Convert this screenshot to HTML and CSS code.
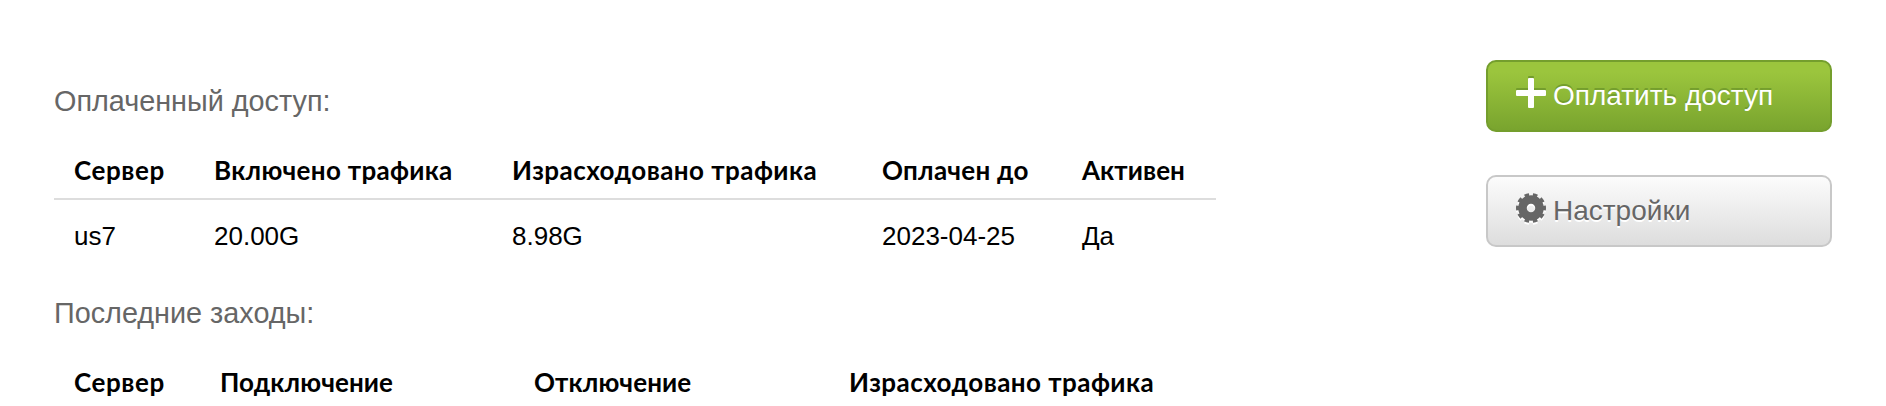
FILE: index.html
```html
<!DOCTYPE html>
<html lang="ru">
<head>
<meta charset="utf-8">
<title>Доступ</title>
<link rel="stylesheet" href="styles.css">
</head>
<body>
<div class="page">
<main class="main">
<h2 class="title">Оплаченный доступ:</h2>
<div class="row head paid"><span class="server">Сервер</span><span class="included">Включено трафика</span><span class="used">Израсходовано трафика</span><span class="until">Оплачен до</span><span>Активен</span></div>
<div class="row paid data"><span>us7</span><span>20.00G</span><span>8.98G</span><span>2023-04-25</span><span>Да</span></div>
<h2 class="title second">Последние заходы:</h2>
<div class="row head visits"><span class="server">Сервер</span><span>Подключение</span><span>Отключение</span><span class="used">Израсходовано трафика</span></div>
</main>
<aside class="side">
<a class="btn green"><svg class="icon" viewBox="0 0 30 30"><path d="M13 0h4q1 0 1 1v11h11q1 0 1 1v4q0 1-1 1H18v11q0 1-1 1h-4q-1 0-1-1V18H1q-1 0-1-1v-4q0-1 1-1h11V1q0-1 1-1z"/></svg><span>Оплатить доступ</span></a>
<a class="btn gray"><svg class="icon" viewBox="0 0 30 30"><circle class="ring" cx="15" cy="15" r="8.500"/><circle class="teeth" cx="15" cy="15" r="13.300" pathLength="100"/></svg><span>Настройки</span></a>
</aside>
</div>
</body>
</html>
```
FILE: styles.css
```css
body { margin: 0; background: #fff; font-family: "Liberation Sans", Arial, sans-serif; color: #000; }
.page { display: flex; justify-content: space-between; height: 406px; padding: 0 54px; box-sizing: border-box; overflow: hidden; }
.main { width: 1162px; padding-top: 81px; }
.title { margin: 0; font-size: 28.8px; line-height: 40px; font-weight: 400; color: #666; }
.row { display: grid; box-sizing: border-box; padding-left: 20px; white-space: nowrap; font-size: 26px; }
.head { height: 79px; line-height: 99px; font-family: "Trebuchet MS", Lato, sans-serif; font-weight: 700; letter-spacing: 0.1px; border-bottom: 2px solid #ddd; }
.server { letter-spacing: 0.6px; }
.included { letter-spacing: 0.3px; }
.used { letter-spacing: 0.45px; }
.until { letter-spacing: 0.25px; }
.paid { grid-template-columns: 140px 298px 370px 200px 1fr; }
.visits { grid-template-columns: 146px 314px 315px 1fr; }
.data { height: 72px; line-height: 72px; }
.second { margin-top: 21px; }
.side { width: 346px; padding-top: 60px; display: flex; flex-direction: column; gap: 43px; }
.btn { display: flex; align-items: center; box-sizing: border-box; height: 72px; padding-left: 28px; gap: 7px; border-radius: 10px; font-size: 28px; }
.green { color: #fff; border: 2px solid #749e2d; background: linear-gradient(#9bc53d 15%, #79a42e); text-shadow: 0 -2px 0 #749e2d; }
.gray { color: #666; border: 2px solid #c8c8c8; background: linear-gradient(#fcfcfc, #ddd); text-shadow: 0 2px 0 #fff; }
.icon { width: 30px; height: 30px; fill: currentColor; margin-top: -6px; overflow: visible; }
.green .icon { filter: drop-shadow(0 -2px 0 #749e2d); }
.gray .icon { filter: drop-shadow(0 2px 0 #fff); }
.ring { fill: none; stroke: currentColor; stroke-width: 8.500px; }
.teeth { fill: none; stroke: currentColor; stroke-width: 3.400px; stroke-dasharray: 5.400 4.600; stroke-dashoffset: 2.700; }
```
